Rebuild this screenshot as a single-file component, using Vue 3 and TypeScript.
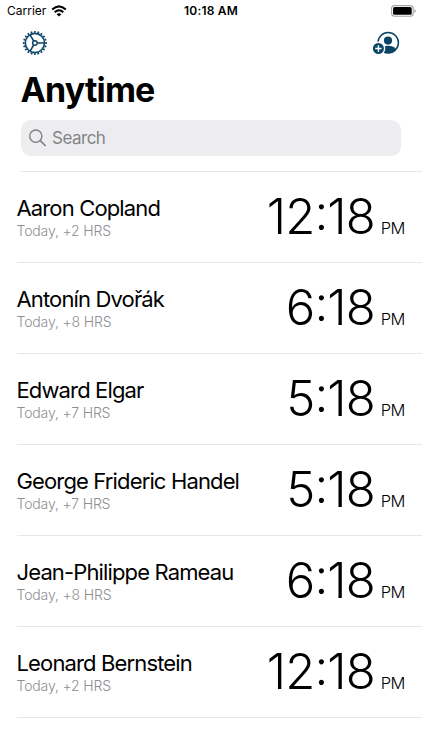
<script setup lang="ts">
interface Contact {
  name: string
  offset: number
  hour: number
  minute: number
}

const contacts: Contact[] = [
  { name: 'Aaron Copland', offset: 2, hour: 12, minute: 18 },
  { name: 'Antonín Dvořák', offset: 8, hour: 6, minute: 18 },
  { name: 'Edward Elgar', offset: 7, hour: 5, minute: 18 },
  { name: 'George Frideric Handel', offset: 7, hour: 5, minute: 18 },
  { name: 'Jean-Philippe Rameau', offset: 8, hour: 6, minute: 18 },
  { name: 'Leonard Bernstein', offset: 2, hour: 12, minute: 18 },
]
</script>

<template>
  <main class="screen">
    <header class="status">
      <div class="carrier">
        <span>Carrier</span>
        <svg class="wifi" width="16" height="12" viewBox="0 0 16 12">
          <g fill="none" stroke="#000" stroke-width="2.1">
            <path d="M1.2 4.6Q8-1.8 14.8 4.6" />
            <path d="M3.7 7.2Q8 3.3 12.3 7.2" />
          </g>
          <path d="M8 11.6L5.6 9.2Q8 7.2 10.4 9.2Z" />
        </svg>
      </div>
      <span class="clock">10:18 AM</span>
      <div class="power">
        <svg width="26" height="12" viewBox="0 0 26 12">
          <rect x=".6" y=".6" width="21.6" height="10.6" rx="3" fill="#fff" stroke="#a4a4a4" stroke-width="1.1" />
          <rect x="2.1" y="2.1" width="18.6" height="7.6" rx="1.5" />
          <path d="M23.4 4.2Q24.8 4.7 24.8 6T23.4 7.8Z" fill="#999" />
        </svg>
      </div>
    </header>

    <nav class="toolbar">
      <svg width="26" height="26" viewBox="0 0 26 26" fill="none" stroke="#0a4566">
        <circle cx="12.9" cy="13" r="9.6" stroke-width="1.6" />
        <circle cx="12.9" cy="13" r="11.1" stroke-width="1.8" pathLength="80" stroke-dasharray="2 2" stroke-dashoffset="1" />
        <circle cx="12.9" cy="13" r="2.3" stroke-width="1.4" />
        <path d="M15.2 13H22.4M11.7 11L8.1 4.8M11.7 15L8.1 21.2" stroke-width="1.5" />
      </svg>
      <svg width="28" height="26" viewBox="0 0 28 26">
        <circle cx="16.2" cy="12.7" r="10.2" fill="#fff" stroke="#0a4566" stroke-width="1.5" />
        <circle cx="16" cy="10.6" r="4.1" fill="#0a4566" />
        <path d="M8.2 19.5Q10.4 15.8 16.2 15.8T24.2 19.5Q21 23.2 16.2 23.2T8.2 19.5Z" fill="#0a4566" />
        <circle cx="6.4" cy="18.5" r="6.2" fill="#0a4566" stroke="#fff" stroke-width="1.4" />
        <path d="M6.4 15.3V21.7M3.2 18.5H9.6" stroke="#fff" stroke-width="1.4" />
      </svg>
    </nav>

    <h1 class="title">Anytime</h1>

    <div class="search">
      <svg width="18" height="18" viewBox="0 0 18 18" fill="none" stroke="#838387" stroke-width="1.4" stroke-linecap="round">
        <circle cx="6.8" cy="7.1" r="6.1" />
        <path d="M11.3 11.6L16.2 16.5" stroke-width="1.7" />
      </svg>
      <span>Search</span>
    </div>

    <ul class="list">
      <li v-for="contact in contacts" :key="contact.name" class="row">
        <div class="info">
          <span class="name">{{ contact.name }}</span>
          <span class="offset">Today, +{{ contact.offset }} HRS</span>
        </div>
        <div class="when">
          <span class="time">{{ contact.hour }}<span class="colon">:</span>{{ contact.minute }}</span>
          <span class="period">PM</span>
        </div>
      </li>
    </ul>
  </main>
</template>

<style>
body {
  background: #fff;
}
</style>

<style scoped>
.screen {
  height: 750px;
  overflow: hidden;
  color: #000;
  background: #fff;
  font-family: Inter, 'Liberation Sans', sans-serif;
}

.status {
  display: grid;
  grid-template-columns: 1fr auto 1fr;
  align-items: center;
  height: 22px;
  padding: 0 7px 0 7px;
  font-size: 12px;
  line-height: 22px;
}

.carrier {
  display: flex;
  align-items: center;
  gap: 5px;
}

.clock {
  font-weight: 600;
  letter-spacing: 0.2px;
}

.power {
  display: flex;
  justify-content: flex-end;
  margin-right: -2px;
}

.toolbar {
  display: flex;
  justify-content: space-between;
  height: 26px;
  padding: 8px 22px 0;
}

.title {
  margin: 13px 0 0 20.5px;
  font-size: 34px;
  font-weight: 700;
  line-height: 42px;
  letter-spacing: -0.85px;
}

.search {
  display: flex;
  align-items: center;
  gap: 5px;
  height: 36px;
  margin: 9px 21px 0;
  padding-left: 8px;
  box-sizing: border-box;
  border-radius: 10px;
  background: #ededef;
  color: #838387;
  font-size: 17px;
  letter-spacing: -0.5px;
}

.list {
  margin: 15px 0 0;
  padding: 0;
  list-style: none;
}

.list::before {
  content: '';
  display: block;
  height: 1px;
  margin-left: 20px;
  background: #e7e7e8;
}

.row {
  display: flex;
  justify-content: space-between;
  height: 91px;
  margin-left: 16.5px;
  padding-right: 17.8px;
  box-sizing: border-box;
  border-bottom: 1px solid #e7e7e8;
}

.info {
  display: flex;
  flex-direction: column;
  padding-top: 22px;
  white-space: nowrap;
}

.name {
  font-size: 22px;
  line-height: 28px;
  letter-spacing: -0.86px;
}

.offset {
  font-size: 14px;
  line-height: 17px;
  font-weight: 300;
  letter-spacing: -0.15px;
  color: #8e8e92;
}

.when {
  display: flex;
  align-items: baseline;
  gap: 6px;
  padding-top: 15px;
  font-weight: 300;
}

.time {
  font-size: 49px;
  line-height: 60px;
  letter-spacing: -0.9px;
}

.colon {
  position: relative;
  top: -4px;
}

.period {
  margin-right: -0.6px;
  font-size: 16.5px;
  letter-spacing: -0.6px;
}
</style>
